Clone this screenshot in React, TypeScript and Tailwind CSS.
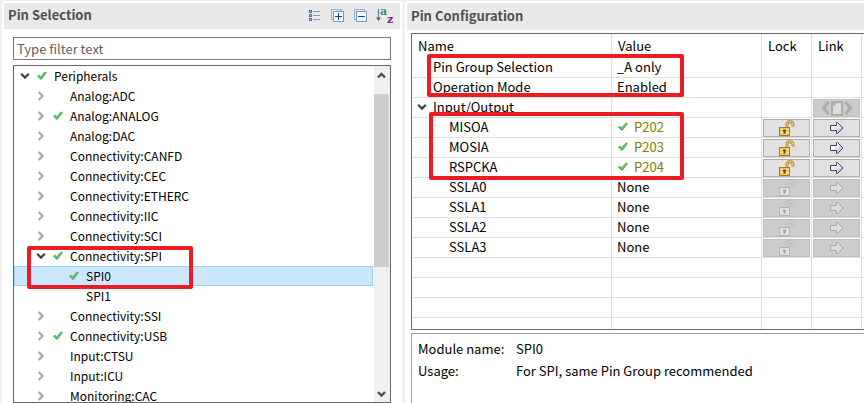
import React from "react";

function Check() {
  return (
    <svg className="block h-[10px] w-[10px] shrink-0" viewBox="0 0 10 10" aria-hidden="true">
      <path d="M0.4 5.2 L2 4 L3.8 5.4 L8 0.8 L9.6 1.6 L4.6 8.2 L3.2 8.2 Z" fill="#55b358" stroke="#3f9a48" strokeWidth="0.5" />
      <path d="M2 5.2 L3.8 6.6 L8.4 1.8" fill="none" stroke="#86cf84" strokeWidth="0.8" />
    </svg>
  );
}

function Chevron({ open }: { open: boolean }) {
  return (
    <svg className="block h-[10px] w-[10px]" viewBox="0 0 10 10" fill="none" aria-hidden="true">
      {open ? (
        <path d="M1.2 2.8 L5 6.6 L8.8 2.8" stroke="#404040" strokeWidth="2.2" />
      ) : (
        <path d="M2.6 1 L6.6 5 L2.6 9" stroke="#a6a6a6" strokeWidth="2.2" />
      )}
    </svg>
  );
}

function ListIcon() {
  return (
    <svg className="block h-4 w-4" viewBox="0 0 16 16" shapeRendering="crispEdges" aria-hidden="true">
      {[2, 6, 10].map((y) => (
        <g key={y}>
          <rect x="2" y={y} width="3" height="3" fill="#4f6fae" />
          <rect x="3" y={y + 1} width="1" height="1" fill="#b9cbe8" />
          <rect x="6" y={y + 1} width="7" height="1" fill="#7f9bc6" />
        </g>
      ))}
    </svg>
  );
}

function BoxIcon({ plus }: { plus: boolean }) {
  return (
    <svg className="block h-4 w-4" viewBox="0 0 16 16" shapeRendering="crispEdges" aria-hidden="true">
      <rect x="1.5" y="1.5" width="10" height="10" fill="#d3ecf7" stroke="#9fb0cb" />
      <rect x="3.5" y="3.5" width="10" height="10" fill="#eefaff" stroke="#7f96bd" />
      <rect x="5" y="8" width="7" height="1" fill="#0a4a86" />
      {plus && <rect x="8" y="5" width="1" height="7" fill="#0a4a86" />}
    </svg>
  );
}

function SortIcon() {
  return (
    <svg className="block h-[22px] w-[18px]" viewBox="0 0 18 22" aria-hidden="true">
      <path d="M2.5 4 V13" stroke="#5d7fae" strokeWidth="1.2" />
      <path d="M0 12.5 H5 L2.5 16 Z" fill="#59607c" />
      <text x="4" y="10" fontSize="11" fontWeight="700" fontFamily="DejaVu Serif, serif" fill="#2a9086">a</text>
      <text x="11" y="18" fontSize="11" fontWeight="700" fontFamily="DejaVu Serif, serif" fill="#861b8c">z</text>
    </svg>
  );
}

function LockIcon({ disabled }: { disabled: boolean }) {
  const c = disabled
    ? { line: "#b2b2b2", body: "#dedede", hi: "#e8e8e8", key: "#9f9f9f" }
    : { line: "#a87a1c", body: "#f0c75a", hi: "#fbeaa6", key: "#5c430f" };
  return (
    <svg className="block h-4 w-4" viewBox="0 0 16 16" aria-hidden="true">
      <path d="M8 8 V4.6 A3 3 0 0 1 14 4.6 V6.4" fill="none" stroke={c.line} strokeWidth="2.8" />
      <path d="M8 8 V4.6 A3 3 0 0 1 14 4.6 V6" fill="none" stroke={c.hi} strokeWidth="1" />
      <rect x="0.5" y="7.5" width="10" height="8" fill={c.body} stroke={c.line} />
      <path d="M1.5 9.5 H10 M1.5 12.5 H10" stroke={c.hi} strokeWidth="1" />
      <path d="M4 9.5 H7 V11 H6.5 V13.5 H4.5 V11 H4 Z" fill={c.key} />
    </svg>
  );
}

function ArrowIcon({ disabled }: { disabled: boolean }) {
  return (
    <svg className="block h-4 w-4" viewBox="0 0 16 16" aria-hidden="true">
      <defs>
        <linearGradient id="arrowFill" x1="0" y1="0" x2="1" y2="1">
          <stop offset="0.3" stopColor="#ffffff" />
          <stop offset="1" stopColor="#9aa2e0" />
        </linearGradient>
      </defs>
      <path
        d="M1.5 5.5 H7.5 V2.5 H8.5 L14 8 L8.5 13.5 H7.5 V10.5 H1.5 Z"
        fill={disabled ? "#dcdcdc" : "url(#arrowFill)"}
        stroke={disabled ? "#a9a9a9" : "#43434d"}
      />
    </svg>
  );
}

function PageIcon() {
  return (
    <svg className="block h-4 w-8 shrink-0" viewBox="0 0 32 16" aria-hidden="true">
      <path d="M7.5 2 L2.5 8 L7.5 14" fill="none" stroke="#adadad" strokeWidth="3.4" />
      <path d="M24.5 2 L29.5 8 L24.5 14" fill="none" stroke="#adadad" strokeWidth="3.4" />
      <rect x="10" y="1" width="12" height="15" fill="#adadad" />
      <path d="M14.5 3 H20 V14 H12 V5.5 H14.5 Z" fill="#dedede" />
    </svg>
  );
}

type Node = { label: string; checked?: boolean; open?: boolean; leaf?: boolean; selected?: boolean; children?: Node[] };

const indents = ["pl-[6px]", "pl-[22px]", "pl-[38px]"];

const tree: Node = {
  label: "Peripherals",
  checked: true,
  open: true,
  children: [
    { label: "Analog:ADC" },
    { label: "Analog:ANALOG", checked: true },
    { label: "Analog:DAC" },
    { label: "Connectivity:CANFD" },
    { label: "Connectivity:CEC" },
    { label: "Connectivity:ETHERC" },
    { label: "Connectivity:IIC" },
    { label: "Connectivity:SCI" },
    {
      label: "Connectivity:SPI",
      checked: true,
      open: true,
      children: [
        { label: "SPI0", checked: true, leaf: true, selected: true },
        { label: "SPI1", leaf: true },
      ],
    },
    { label: "Connectivity:SSI" },
    { label: "Connectivity:USB", checked: true },
    { label: "Input:CTSU" },
    { label: "Input:ICU" },
    { label: "Monitoring:CAC" },
  ],
};

function TreeItem({ node, level }: { node: Node; level: number }) {
  return (
    <li role="treeitem" aria-expanded={node.leaf ? undefined : !!node.open} aria-selected={!!node.selected} className="relative">
      <div className={`relative flex h-5 items-center ${indents[level]}`}>
        {node.selected && <span className="absolute inset-0 border border-[#99d1ff] bg-[#cce8ff]" />}
        <span className="relative w-4 shrink-0">
          {!node.leaf && (
            <button type="button" aria-label={`Toggle ${node.label}`} className="block">
              <Chevron open={!!node.open} />
            </button>
          )}
        </span>
        <span className="relative w-[18px] shrink-0 pl-px">{node.checked && <Check />}</span>
        <span className="relative whitespace-nowrap">{node.label}</span>
      </div>
      {node.children && (
        <ul role="group">
          {node.children.map((c) => (
            <TreeItem key={c.label} node={c} level={level + 1} />
          ))}
        </ul>
      )}
      {level === 1 && node.open && <Marker className="top-0 left-[13px] h-[43px] w-[166px]" />}
    </li>
  );
}

function Marker({ className }: { className: string }) {
  return <div className={`pointer-events-none absolute z-10 rounded-[2px] border-4 border-[#ed1c24] ${className}`} />;
}

type Row = { name: string; value?: string; pin?: boolean; kind: "top" | "group" | "signal" | "blank" };

const rows: Row[] = [
  { name: "Pin Group Selection", value: "_A only", kind: "top" },
  { name: "Operation Mode", value: "Enabled", kind: "top" },
  { name: "Input/Output", kind: "group" },
  { name: "MISOA", value: "P202", pin: true, kind: "signal" },
  { name: "MOSIA", value: "P203", pin: true, kind: "signal" },
  { name: "RSPCKA", value: "P204", pin: true, kind: "signal" },
  { name: "SSLA0", value: "None", kind: "signal" },
  { name: "SSLA1", value: "None", kind: "signal" },
  { name: "SSLA2", value: "None", kind: "signal" },
  { name: "SSLA3", value: "None", kind: "signal" },
  { name: "", kind: "blank" },
  { name: "", kind: "blank" },
  { name: "", kind: "blank" },
];

function CellButton({ disabled, label, children }: { disabled: boolean; label: string; children: React.ReactNode }) {
  return (
    <button
      type="button"
      disabled={disabled}
      aria-label={label}
      className={`mt-px ml-px flex h-[18px] w-[47px] items-center justify-center border ${
        disabled ? "border-[#bfbfbf] bg-[#cccccc]" : "border-[#adadad] bg-[#e1e1e1]"
      }`}
    >
      {children}
    </button>
  );
}

const cell = "border-r border-b border-[#e0e0e0] p-0 align-top";
const head = "h-6 border-r border-[#e0e0e0] p-0 pl-[6px] text-left font-normal";

function PinTable() {
  return (
    <div className="relative h-[297px] overflow-hidden border border-r-0 border-[#696969]">
      <table className="w-full table-fixed border-separate border-spacing-0">
        <colgroup>
          <col className="w-[200px]" />
          <col className="w-[150px]" />
          <col className="w-[50px]" />
          <col className="w-[50px]" />
          <col />
        </colgroup>
        <thead>
          <tr>
            <th className={head}>Name</th>
            <th className={head}>Value</th>
            <th className={head}>Lock</th>
            <th className={head}>Link</th>
            <th className="p-0" />
          </tr>
        </thead>
        <tbody>
          {rows.map((r, i) => (
            <tr key={i} className="h-5">
              <td className={cell}>
                <div
                  className={`flex h-[18px] items-center ${
                    r.kind === "signal" ? "pl-[37px]" : r.kind === "group" ? "pl-[5px]" : "pl-[21px]"
                  }`}
                >
                  {r.kind === "group" && (
                    <button type="button" aria-label="Toggle Input/Output" className="w-4">
                      <Chevron open />
                    </button>
                  )}
                  {r.name}
                </div>
              </td>
              <td className={cell}>
                <div className={`flex h-[18px] items-center gap-[6px] ${r.pin ? "pl-[6px] text-[#808000]" : "pl-[5px]"}`}>
                  {r.pin && <Check />}
                  {r.value}
                </div>
              </td>
              <td className={cell}>
                {r.kind === "signal" && (
                  <CellButton disabled={!r.pin} label={`Lock ${r.name}`}>
                    <LockIcon disabled={!r.pin} />
                  </CellButton>
                )}
              </td>
              <td className={cell}>
                {r.kind === "signal" && (
                  <CellButton disabled={!r.pin} label={`Link ${r.name}`}>
                    <ArrowIcon disabled={!r.pin} />
                  </CellButton>
                )}
                {r.kind === "group" && (
                  <CellButton disabled label="Link pages">
                    <PageIcon />
                  </CellButton>
                )}
              </td>
              <td className="border-b border-[#e0e0e0] p-0" />
            </tr>
          ))}
          <tr className="h-[11px]">
            {[0, 1, 2, 3].map((n) => (
              <td key={n} className="border-r border-[#e0e0e0] p-0" />
            ))}
            <td className="p-0" />
          </tr>
        </tbody>
      </table>
      <Marker className="top-5 left-[15px] h-[43px] w-[257px]" />
      <Marker className="top-[78px] left-[17px] h-[68px] w-[255px]" />
    </div>
  );
}

export default function App() {
  return (
    <div className="flex h-screen gap-[3px] overflow-hidden bg-[#f0f0f0] pt-px pl-[2px] font-['Noto_Sans_CJK_SC','Noto_Sans',sans-serif] text-[13px] leading-[18px] text-black">
      <section className="flex w-[400px] shrink-0 flex-col rounded-tl-[3px] bg-white px-[2px] pt-[2px]">
        <header className="flex h-[26px] shrink-0 items-center justify-between bg-[#e9e9e9] pr-[6px] pl-1">
          <h2 className="pb-[2px] font-bold text-[#505050]">Pin Selection</h2>
          <div className="flex items-center gap-[7px]">
            <button type="button" aria-label="List view"><ListIcon /></button>
            <button type="button" aria-label="Expand all"><BoxIcon plus /></button>
            <button type="button" aria-label="Collapse all"><BoxIcon plus={false} /></button>
            <button type="button" aria-label="Sort"><SortIcon /></button>
          </div>
        </header>
        <div className="flex min-h-0 flex-1 flex-col gap-[5px] pt-2 pr-[9px] pl-[9px]">
          <input
            type="text"
            aria-label="Filter"
            placeholder="Type filter text"
            className="h-[23px] w-full shrink-0 border border-[#7a7a7a] px-[3px] placeholder:text-[#606060]"
          />
          <div className="flex min-h-0 flex-1 border border-[#696969]">
            <ul role="tree" className="min-w-0 flex-1 overflow-hidden pr-px text-xs leading-[18px]">
              <TreeItem node={tree} level={0} />
            </ul>
            <div className="flex w-4 shrink-0 flex-col bg-[#f0f0f0]" aria-hidden="true">
              <svg className="block h-7 w-4" viewBox="0 0 16 28" fill="none">
                <path d="M4 11.5 L7.5 8 L11 11.5" stroke="#505050" strokeWidth="2.4" />
              </svg>
              <div className="h-[173px] w-[15px] bg-[#cdcdcd]" />
              <svg className="mt-auto block h-4 w-4" viewBox="0 0 16 16" fill="none">
                <path d="M4 6 L7.5 9.5 L11 6" stroke="#505050" strokeWidth="2.4" />
              </svg>
            </div>
          </div>
        </div>
      </section>

      <section className="flex min-w-0 flex-1 flex-col rounded-tl-[3px] bg-white pt-[2px] pl-[2px]">
        <header className="flex h-[27px] shrink-0 items-center bg-[#e9e9e9] pl-1">
          <h2 className="pb-[2px] font-bold text-[#505050]">Pin Configuration</h2>
        </header>
        <div className="flex min-h-0 flex-1 flex-col gap-[3px] pt-[3px] pl-1">
          <PinTable />
          <dl className="grid flex-1 auto-rows-[22px] grid-cols-[98px_1fr] items-center border-t border-l border-[#a0a0a0] pt-1 pl-[6px]">
            <dt>Module name:</dt>
            <dd>SPI0</dd>
            <dt>Usage:</dt>
            <dd>For SPI, same Pin Group recommended</dd>
          </dl>
        </div>
      </section>
    </div>
  );
}
